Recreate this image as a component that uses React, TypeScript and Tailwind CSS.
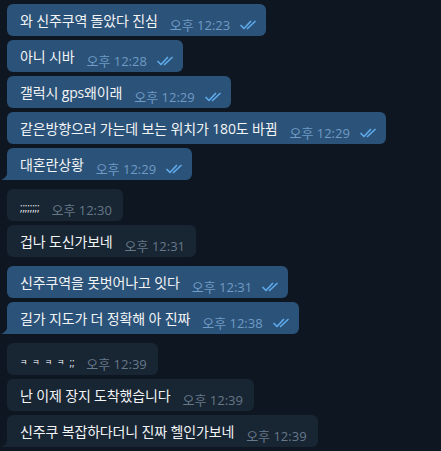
type Msg = {
  text: React.ReactNode;
  time: string;
  out: boolean;
  tail?: boolean;
  groupStart?: boolean;
};

const semis = <span className="text-[10px] tracking-[-0.2px]">;;;;;;;;</span>;

const messages: Msg[] = [
  { text: "와 신주쿠역 돌았다 진심", time: "오후 12:23", out: true },
  { text: "아니 시바", time: "오후 12:28", out: true },
  { text: "갤럭시 gps왜이래", time: "오후 12:29", out: true },
  { text: "같은방향으러 가는데 보는 위치가 180도 바뀜", time: "오후 12:29", out: true },
  { text: "대혼란상황", time: "오후 12:29", out: true, tail: true },
  { text: semis, time: "오후 12:30", out: false, groupStart: true },
  { text: "겁나 도신가보네", time: "오후 12:31", out: false },
  { text: "신주쿠역을 못벗어나고 잇다", time: "오후 12:31", out: true, groupStart: true },
  { text: "길가 지도가 더 정확해 아 진짜", time: "오후 12:38", out: true, tail: true },
  {
    text: (
      <span className="inline-flex items-center">
        <span className="text-[8px] tracking-[5px]">ㅋㅋㅋㅋ</span>
        <span className="text-[10px] tracking-[-0.2px]">;;</span>
      </span>
    ),
    time: "오후 12:39",
    out: false,
    groupStart: true,
  },
  { text: "난 이제 장지 도착했습니다", time: "오후 12:39", out: false },
  { text: "신주쿠 복잡하다더니 진짜 헬인가보네", time: "오후 12:39", out: false, tail: true },
];

function Checks() {
  return (
    <svg width="17" height="10" viewBox="0 0 17 10" fill="none" className="ml-[10px] mb-[3px]">
      <path d="M1 5.5 L4 8.5 L10.5 1.5" stroke="#5ea9ea" strokeWidth="1.7" strokeLinecap="round" strokeLinejoin="round" />
      <path d="M7.5 8.5 L15 1.5" stroke="#5ea9ea" strokeWidth="1.7" strokeLinecap="round" strokeLinejoin="round" />
    </svg>
  );
}

function Tail({ color }: { color: string }) {
  return (
    <svg width="7" height="11" viewBox="0 0 7 11" className="absolute -left-[6px] bottom-0">
      <path d="M7 0 C7 5 5 9 0 11 L7 11 Z" fill={color} />
    </svg>
  );
}

function Bubble({ m }: { m: Msg }) {
  const bg = m.out ? "#2b5278" : "#182533";
  return (
    <div
      className={`relative flex h-[32px] w-fit rounded-[6px] pl-[13px] ${m.out ? "pr-[9px] bg-[#2b5278]" : "pr-[11px] bg-[#182533]"} ${
        m.tail ? "rounded-bl-none" : ""
      } ${m.groupStart ? "mt-[9px]" : "mt-[4px]"}`}
    >
      {m.tail && <Tail color={bg} />}
      <div className="self-start mt-[7px] text-[14px] leading-[20px] tracking-[-0.15px] text-[#f2f4f6] whitespace-nowrap">
        {m.text}
      </div>
      <div className="self-end flex items-end mb-[3px] ml-[12px]">
        <span className={`text-[13px] leading-[16px] whitespace-nowrap ${m.out ? "text-[#6f9bc6]" : "text-[#667889]"}`}>
          {m.time}
        </span>
        {m.out && <Checks />}
      </div>
    </div>
  );
}

export default function App() {
  return (
    <div
      className="w-[441px] h-[451px] overflow-hidden bg-[#0e1621] pl-[7px] pt-0"
      style={{ fontFamily: "'Open Sans', 'Noto Sans CJK KR', sans-serif" }}
    >
      <div className="flex flex-col">
        {messages.map((m, i) => (
          <Bubble key={i} m={m} />
        ))}
      </div>
    </div>
  );
}
